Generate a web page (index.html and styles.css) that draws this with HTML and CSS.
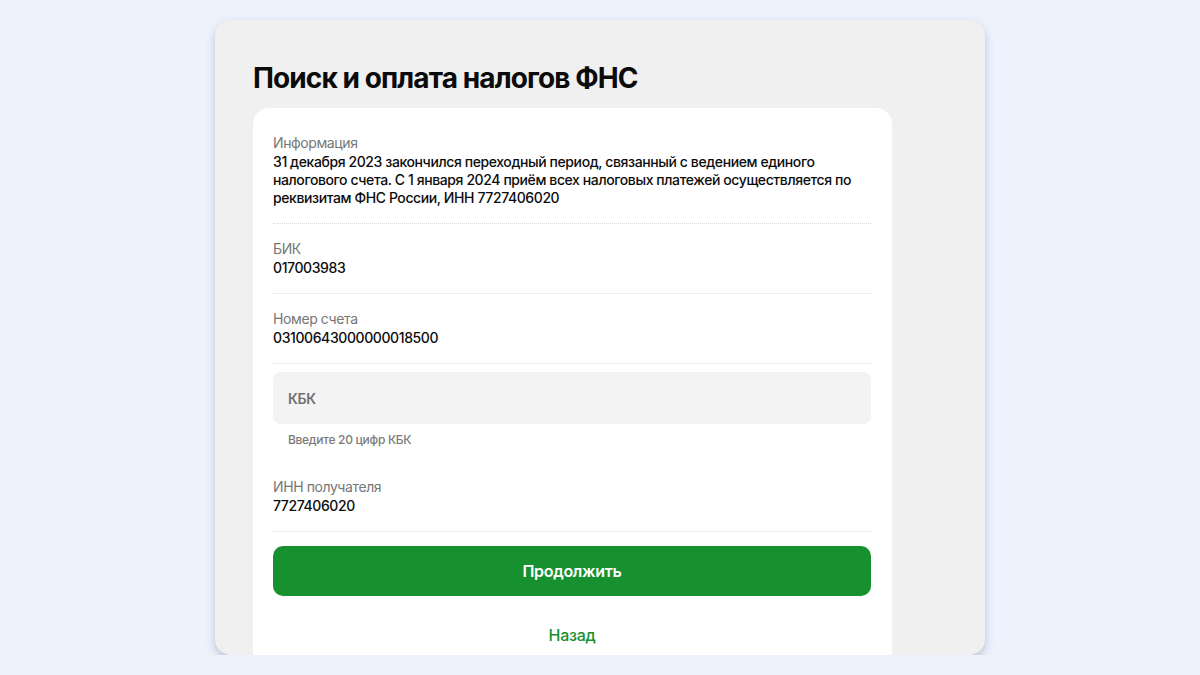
FILE: index.html
```html
<!DOCTYPE html>
<html lang="ru">
<head>
<meta charset="utf-8">
<title>Поиск и оплата налогов ФНС</title>
<link rel="stylesheet" href="styles.css">
</head>
<body>
<div class="page">
  <div class="card">
    <h1 class="title">Поиск и оплата налогов ФНС</h1>
    <div class="panel">
      <div class="row">
        <div class="label">Информация</div>
        <div class="value">31 декабря 2023 закончился переходный период, связанный с ведением единого налогового счета. С 1 января 2024 приём всех налоговых платежей осуществляется по реквизитам ФНС России, ИНН 7727406020</div>
      </div>
      <div class="row">
        <div class="label">БИК</div>
        <div class="value">017003983</div>
      </div>
      <div class="row">
        <div class="label">Номер счета</div>
        <div class="value">03100643000000018500</div>
      </div>
      <div class="field-block">
        <div class="field">КБК</div>
        <div class="hint">Введите 20 цифр КБК</div>
      </div>
      <div class="row">
        <div class="label">ИНН получателя</div>
        <div class="value">7727406020</div>
      </div>
      <button class="btn">Продолжить</button>
      <div class="back">Назад</div>
    </div>
  </div>
</div>
</body>
</html>
```
FILE: styles.css
```css
* { box-sizing: border-box; }
html, body { margin: 0; padding: 0; }
body {
  background: #edf3fd;
  font-family: Inter, "Noto Sans", sans-serif;
  color: #111;
}
.page {
  display: flex;
  justify-content: center;
  padding-top: 20px;
}
.card {
  width: 770px;
  height: 635px;
  background: #f0f0f0;
  border-radius: 16px;
  overflow: hidden;
  padding: 40px 38px 0 38px;
  box-shadow: 0 4px 10px rgba(60, 70, 100, 0.28);
  display: flex;
  flex-direction: column;
}
.title {
  margin: 0;
  font-size: 28px;
  line-height: 36px;
  font-weight: 700;
  color: #0b0b0b;
  letter-spacing: -0.9px;
}
.panel {
  margin-top: 12px;
  width: 639px;
  flex: 1;
  background: #fff;
  border-radius: 16px 16px 0 0;
  padding: 10px 21px 0 20px;
}
.row {
  padding: 15px 0 16px;
  border-bottom: 1px dotted #d9d9d9;
}
.label {
  font-size: 14px;
  line-height: 20px;
  color: #767676;
  font-weight: 400;
  letter-spacing: -0.4px;
}
.value {
  font-size: 14px;
  line-height: 18px;
  font-weight: 500;
  color: #0c0c0c;
  letter-spacing: -0.4px;
}
.field-block {
  padding-top: 8px;
  padding-bottom: 14px;
}
.field {
  height: 52px;
  background: #f3f3f3;
  border-radius: 8px;
  padding-left: 15px;
  display: flex;
  align-items: center;
  font-size: 14px;
  font-weight: 600;
  color: #6f6f6f;
  letter-spacing: -0.3px;
}
.hint {
  margin-top: 8px;
  padding-left: 15px;
  font-size: 12px;
  line-height: 16px;
  font-weight: 500;
  color: #7a7a7a;
  letter-spacing: -0.3px;
}
.btn {
  display: block;
  width: 100%;
  height: 50px;
  margin-top: 14px;
  border: none;
  border-radius: 10px;
  background: #17902f;
  color: #fff;
  font-family: inherit;
  font-size: 16px;
  font-weight: 600;
  letter-spacing: -0.3px;
}
.back {
  margin-top: 28px;
  text-align: center;
  font-size: 16px;
  line-height: 22px;
  font-weight: 500;
  color: #17902f;
  letter-spacing: -0.3px;
}
```
